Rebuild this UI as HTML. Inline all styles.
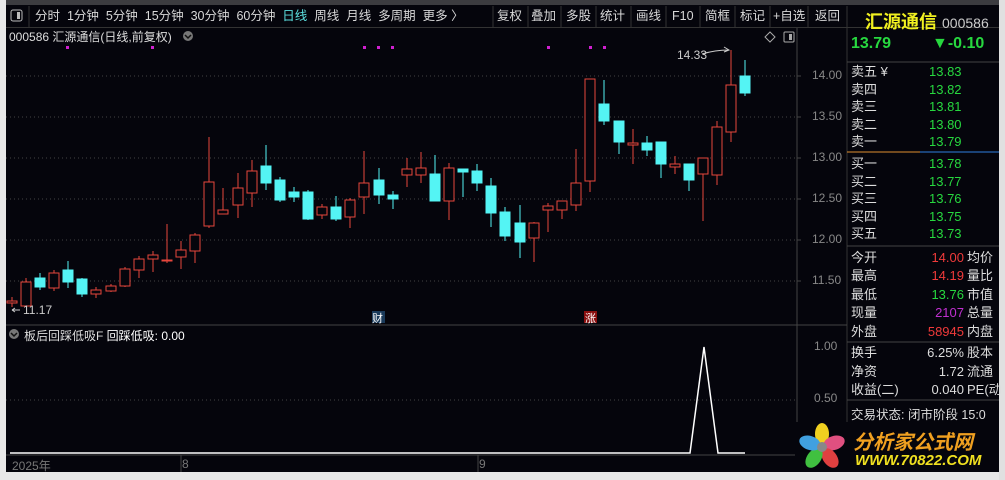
<!DOCTYPE html><html><head><meta charset="utf-8"><style>
body{margin:0;width:1005px;height:480px;background:#05050c;overflow:hidden;position:relative;font-family:"Liberation Sans","Noto Sans CJK SC",sans-serif;color:#ccc}
.a{position:absolute;white-space:nowrap}
.tb{top:6px;height:21px;font-size:12.5px;line-height:21px;color:#d8d8d8}
.r{position:absolute;left:851px;font-size:13px;color:#ddd;white-space:nowrap}
.g{color:#27d83f}.rd{color:#f03a3a}
.ax{position:absolute;left:812px;font-size:12px;color:#888}
</style></head><body>
<div class="a" style="left:0;top:0;width:1005px;height:5px;background:#3c3c40"></div>
<div class="a" style="left:0;top:0;width:6px;height:472px;background:#e8e8e8"></div>
<div class="a" style="left:0;top:472px;width:1005px;height:8px;background:#e8e8e8"></div>
<div class="a" style="left:999px;top:0;width:6px;height:480px;background:#e0e0e0"></div>
<div class="a" style="left:6px;top:27px;width:993px;height:1px;background:#333"></div>
<svg class="a" style="left:0;top:0" width="1005" height="480">
<rect x="11" y="10" width="11" height="11" rx="2" fill="none" stroke="#bbb"/><rect x="17" y="12" width="3" height="7" fill="#bbb"/>
<line x1="29" y1="6" x2="29" y2="27" stroke="#333"/>
<g stroke="#333"><line x1="493" y1="6" x2="493" y2="27"/><line x1="528" y1="6" x2="528" y2="27"/><line x1="561" y1="6" x2="561" y2="27"/><line x1="596" y1="6" x2="596" y2="27"/><line x1="631" y1="6" x2="631" y2="27"/><line x1="666" y1="6" x2="666" y2="27"/><line x1="700" y1="6" x2="700" y2="27"/><line x1="735" y1="6" x2="735" y2="27"/><line x1="770" y1="6" x2="770" y2="27"/><line x1="808" y1="6" x2="808" y2="27"/><line x1="847" y1="6" x2="847" y2="472"/></g>
<circle cx="188" cy="36" r="5" fill="#777"/><path d="M185 35l3 3 3-3" stroke="#111" fill="none" stroke-width="1.5"/>
<path d="M770 32l5 5-5 5-5-5z" fill="none" stroke="#aaa"/><rect x="784" y="32" width="10" height="10" rx="1" fill="none" stroke="#aaa"/><rect x="789" y="34" width="3" height="6" fill="#aaa"/>
<g fill="#d020d0"><rect x="66" y="46" width="3" height="3"/><rect x="151" y="46" width="3" height="3"/><rect x="363" y="46" width="3" height="3"/><rect x="377" y="46" width="3" height="3"/><rect x="391" y="46" width="3" height="3"/><rect x="547" y="46" width="3" height="3"/><rect x="589" y="46" width="3" height="3"/><rect x="603" y="46" width="3" height="3"/></g>
<g stroke="#444" stroke-dasharray="1,3"><line x1="6" y1="76" x2="797" y2="76"/><line x1="6" y1="117" x2="797" y2="117"/><line x1="6" y1="158" x2="797" y2="158"/><line x1="6" y1="199" x2="797" y2="199"/><line x1="6" y1="240" x2="797" y2="240"/><line x1="6" y1="281" x2="797" y2="281"/><line x1="6" y1="400" x2="797" y2="400"/></g>
<line x1="797" y1="28" x2="797" y2="455" stroke="#444"/>
<line x1="6" y1="325" x2="847" y2="325" stroke="#444"/>
<line x1="6" y1="455" x2="797" y2="455" stroke="#444"/>
<g stroke-width="1">
<g stroke="#e8463c" fill="#05050c">
<line x1="12" y1="297" x2="12" y2="307"/><rect x="7" y="301" width="10" height="2"/>
<line x1="26" y1="278" x2="26" y2="307"/><rect x="21" y="282" width="10" height="24"/>
<line x1="54" y1="270" x2="54" y2="291"/><rect x="49" y="273" width="10" height="15"/>
<line x1="96" y1="287" x2="96" y2="298"/><rect x="91" y="290" width="10" height="4"/>
<line x1="111" y1="284" x2="111" y2="292"/><rect x="106" y="286" width="10" height="5"/>
<line x1="125" y1="267" x2="125" y2="287"/><rect x="120" y="269" width="10" height="17"/>
<line x1="139" y1="256" x2="139" y2="278"/><rect x="134" y="259" width="10" height="11"/>
<line x1="153" y1="251" x2="153" y2="272"/><rect x="148" y="255" width="10" height="4"/>
<line x1="167" y1="224" x2="167" y2="263"/><rect x="162" y="260" width="10" height="1"/>
<line x1="181" y1="241" x2="181" y2="269"/><rect x="176" y="250" width="10" height="7"/>
<line x1="195" y1="233" x2="195" y2="263"/><rect x="190" y="235" width="10" height="16"/>
<line x1="209" y1="137" x2="209" y2="228"/><rect x="204" y="182" width="10" height="44"/>
<line x1="223" y1="188" x2="223" y2="214"/><rect x="218" y="210" width="10" height="4"/>
<line x1="238" y1="173" x2="238" y2="218"/><rect x="233" y="188" width="10" height="17"/>
<line x1="252" y1="160" x2="252" y2="207"/><rect x="247" y="171" width="10" height="22"/>
<line x1="322" y1="204" x2="322" y2="219"/><rect x="317" y="207" width="10" height="8"/>
<line x1="350" y1="198" x2="350" y2="228"/><rect x="345" y="200" width="10" height="17"/>
<line x1="364" y1="151" x2="364" y2="214"/><rect x="359" y="183" width="10" height="14"/>
<line x1="407" y1="158" x2="407" y2="187"/><rect x="402" y="169" width="10" height="6"/>
<line x1="421" y1="152" x2="421" y2="183"/><rect x="416" y="168" width="10" height="7"/>
<line x1="449" y1="163" x2="449" y2="220"/><rect x="444" y="168" width="10" height="33"/>
<line x1="534" y1="222" x2="534" y2="262"/><rect x="529" y="223" width="10" height="15"/>
<line x1="548" y1="203" x2="548" y2="232"/><rect x="543" y="206" width="10" height="4"/>
<line x1="562" y1="201" x2="562" y2="219"/><rect x="557" y="201" width="10" height="9"/>
<line x1="576" y1="149" x2="576" y2="211"/><rect x="571" y="183" width="10" height="22"/>
<line x1="590" y1="79" x2="590" y2="192"/><rect x="585" y="79" width="10" height="102"/>
<line x1="633" y1="129" x2="633" y2="164"/><rect x="628" y="143" width="10" height="2"/>
<line x1="675" y1="156" x2="675" y2="174"/><rect x="670" y="164" width="10" height="3"/>
<line x1="703" y1="158" x2="703" y2="221"/><rect x="698" y="158" width="10" height="16"/>
<line x1="717" y1="121" x2="717" y2="185"/><rect x="712" y="127" width="10" height="48"/>
<line x1="731" y1="50" x2="731" y2="142"/><rect x="726" y="85" width="10" height="47"/>
</g>
<g stroke="#54f4f4" fill="#54f4f4">
<line x1="40" y1="273" x2="40" y2="290"/><rect x="35" y="278" width="10" height="9"/>
<line x1="68" y1="261" x2="68" y2="288"/><rect x="63" y="270" width="10" height="12"/>
<line x1="82" y1="278" x2="82" y2="297"/><rect x="77" y="279" width="10" height="15"/>
<line x1="266" y1="145" x2="266" y2="190"/><rect x="261" y="166" width="10" height="17"/>
<line x1="280" y1="177" x2="280" y2="202"/><rect x="275" y="180" width="10" height="20"/>
<line x1="294" y1="187" x2="294" y2="202"/><rect x="289" y="192" width="10" height="5"/>
<line x1="308" y1="190" x2="308" y2="220"/><rect x="303" y="192" width="10" height="27"/>
<line x1="336" y1="196" x2="336" y2="221"/><rect x="331" y="207" width="10" height="12"/>
<line x1="379" y1="168" x2="379" y2="204"/><rect x="374" y="180" width="10" height="15"/>
<line x1="393" y1="191" x2="393" y2="209"/><rect x="388" y="195" width="10" height="4"/>
<line x1="435" y1="155" x2="435" y2="201"/><rect x="430" y="174" width="10" height="27"/>
<line x1="463" y1="169" x2="463" y2="197"/><rect x="458" y="169" width="10" height="3"/>
<line x1="477" y1="164" x2="477" y2="191"/><rect x="472" y="171" width="10" height="12"/>
<line x1="491" y1="178" x2="491" y2="227"/><rect x="486" y="186" width="10" height="27"/>
<line x1="505" y1="207" x2="505" y2="241"/><rect x="500" y="212" width="10" height="24"/>
<line x1="520" y1="205" x2="520" y2="258"/><rect x="515" y="223" width="10" height="19"/>
<line x1="604" y1="80" x2="604" y2="125"/><rect x="599" y="104" width="10" height="17"/>
<line x1="619" y1="121" x2="619" y2="154"/><rect x="614" y="121" width="10" height="21"/>
<line x1="647" y1="136" x2="647" y2="156"/><rect x="642" y="143" width="10" height="7"/>
<line x1="661" y1="142" x2="661" y2="178"/><rect x="656" y="142" width="10" height="22"/>
<line x1="689" y1="164" x2="689" y2="191"/><rect x="684" y="164" width="10" height="16"/>
<line x1="745" y1="60" x2="745" y2="96"/><rect x="740" y="76" width="10" height="17"/>
</g></g>
<path d="M702 54 Q715 50 729 50 M724 47l5 3-5 2" stroke="#ccc" fill="none"/>
<path d="M12 310h8M12 310l3-2M12 310l3 2" stroke="#ccc" fill="none"/>
<polyline points="10,453 690,453 704,347 718,453 745,453" stroke="#fff" fill="none" stroke-width="1.5"/>
<circle cx="14" cy="334" r="5" fill="#777"/><path d="M11 333l3 3 3-3" stroke="#111" fill="none" stroke-width="1.5"/>
<g stroke="#444"><line x1="181" y1="455" x2="181" y2="472"/><line x1="478" y1="455" x2="478" y2="472"/><line x1="797" y1="76" x2="801" y2="76"/><line x1="797" y1="117" x2="801" y2="117"/><line x1="797" y1="158" x2="801" y2="158"/><line x1="797" y1="199" x2="801" y2="199"/><line x1="797" y1="240" x2="801" y2="240"/><line x1="797" y1="281" x2="801" y2="281"/></g>
<g stroke="#444"><line x1="847" y1="62" x2="999" y2="62"/><line x1="847" y1="246" x2="999" y2="246"/><line x1="847" y1="342" x2="999" y2="342"/><line x1="847" y1="400" x2="999" y2="400"/></g>
<line x1="847" y1="152" x2="920" y2="152" stroke="#e09030"/><line x1="920" y1="152" x2="999" y2="152" stroke="#3080e0"/>
<rect x="372" y="311" width="13" height="12" fill="#1a3a5a"/><rect x="584" y="311" width="13" height="12" fill="#8a1010"/>
</svg>
<div class="a tb" style="left:35px">分时 &nbsp;1分钟 &nbsp;5分钟 &nbsp;15分钟 &nbsp;30分钟 &nbsp;60分钟 &nbsp;<span style="color:#5ce0e0">日线</span> &nbsp;周线 &nbsp;月线 &nbsp;多周期 &nbsp;更多 〉</div>
<div class="a tb" style="left:497px">复权</div><div class="a tb" style="left:531px">叠加</div><div class="a tb" style="left:566px">多股</div><div class="a tb" style="left:600px">统计</div><div class="a tb" style="left:636px">画线</div><div class="a tb" style="left:672px">F10</div><div class="a tb" style="left:705px">简框</div><div class="a tb" style="left:740px">标记</div><div class="a tb" style="left:773px">+自选</div><div class="a tb" style="left:815px">返回</div>
<div class="a" style="left:9px;top:28px;font-size:12px;color:#ddd">000586 汇源通信(日线,前复权)</div>
<div class="a" style="left:677px;top:48px;font-size:12px;color:#ccc">14.33</div>
<div class="a" style="left:23px;top:303px;font-size:12px;color:#ccc">11.17</div>
<div class="a" style="left:372px;top:310px;font-size:11px;color:#fff">财</div><div class="a" style="left:585px;top:310px;font-size:11px;color:#fff">涨</div>
<div class="a" style="left:24px;top:327px;font-size:12px;color:#ddd">板后回踩低吸F <span style="color:#fff">回踩低吸: 0.00</span></div>
<div class="a" style="left:12px;top:457px;font-size:12px;color:#777">2025年</div><div class="a" style="left:182px;top:457px;font-size:12px;color:#777">8</div><div class="a" style="left:479px;top:457px;font-size:12px;color:#777">9</div>
<div class="ax" style="top:68px">14.00</div><div class="ax" style="top:109px">13.50</div><div class="ax" style="top:150px">13.00</div><div class="ax" style="top:191px">12.50</div><div class="ax" style="top:232px">12.00</div><div class="ax" style="top:273px">11.50</div>
<div class="ax" style="top:339px;left:814px">1.00</div><div class="ax" style="top:391px;left:814px">0.50</div>
<div class="r" style="left:865px;top:8px;font-size:18px;font-weight:bold;color:#f0f020">汇源通信 <span style="font-size:14px;font-weight:normal;color:#ccc">000586</span></div>
<div class="r g" style="left:851px;top:35px;font-size:16px;font-weight:bold">13.79</div>
<div class="r g" style="left:932px;top:35px;font-size:16px;font-weight:bold">▼-0.10</div>
<div class="r" style="top:63px;line-height:17.6px">卖五 ¥<br>卖四<br>卖三<br>卖二<br>卖一</div>
<div class="r g" style="left:929px;top:63px;line-height:17.6px">13.83<br>13.82<br>13.81<br>13.80<br>13.79</div>
<div class="r" style="top:155px;line-height:17.6px">买一<br>买二<br>买三<br>买四<br>买五</div>
<div class="r g" style="left:929px;top:155px;line-height:17.6px">13.78<br>13.77<br>13.76<br>13.75<br>13.73</div>
<div class="r" style="top:249px;line-height:18.4px">今开<br>最高<br>最低<br>现量<br>外盘</div>
<div class="r" style="left:912px;top:249px;line-height:18.4px;text-align:right;width:52px"><span class="rd">14.00</span><br><span class="rd">14.19</span><br><span class="g">13.76</span><br><span style="color:#c030d0">2107</span><br><span class="rd">58945</span></div>
<div class="r" style="left:967px;top:249px;line-height:18.4px">均价<br>量比<br>市值<br>总量<br>内盘</div>
<div class="r" style="top:344px;line-height:18.6px">换手<br>净资<br>收益(二)</div>
<div class="r" style="left:912px;top:344px;line-height:18.6px;text-align:right;width:52px">6.25%<br>1.72<br>0.040</div>
<div class="r" style="left:967px;top:344px;line-height:18.6px">股本<br>流通<br>PE(动</div>
<div class="r" style="top:404px;font-size:12.5px">交易状态: 闭市阶段 15:0</div>
<div class="a" style="left:795px;top:422px;width:200px;height:50px;background:#05050c"></div>
<svg class="a" style="left:797px;top:422px" width="50" height="50"><g transform="translate(25,25)"><ellipse cx="0" cy="-13" rx="7" ry="11" fill="#f0d020"/><ellipse cx="12" cy="-4" rx="7" ry="11" transform="rotate(72 12 -4)" fill="#e05080"/><ellipse cx="8" cy="11" rx="7" ry="11" transform="rotate(144 8 11)" fill="#e04040"/><ellipse cx="-8" cy="11" rx="7" ry="11" transform="rotate(216 -8 11)" fill="#40c040"/><ellipse cx="-12" cy="-4" rx="7" ry="11" transform="rotate(288 -12 -4)" fill="#40a0e0"/><circle r="5" fill="#888"/></g></svg>
<div class="a" style="left:853px;top:426px;font-size:20px;font-weight:bold;font-style:italic;color:#f0a020">分析家公式网</div>
<div class="a" style="left:855px;top:452px;font-size:15px;font-weight:bold;font-style:italic;color:#f0e020">WWW.70822.COM</div>
</body></html>
